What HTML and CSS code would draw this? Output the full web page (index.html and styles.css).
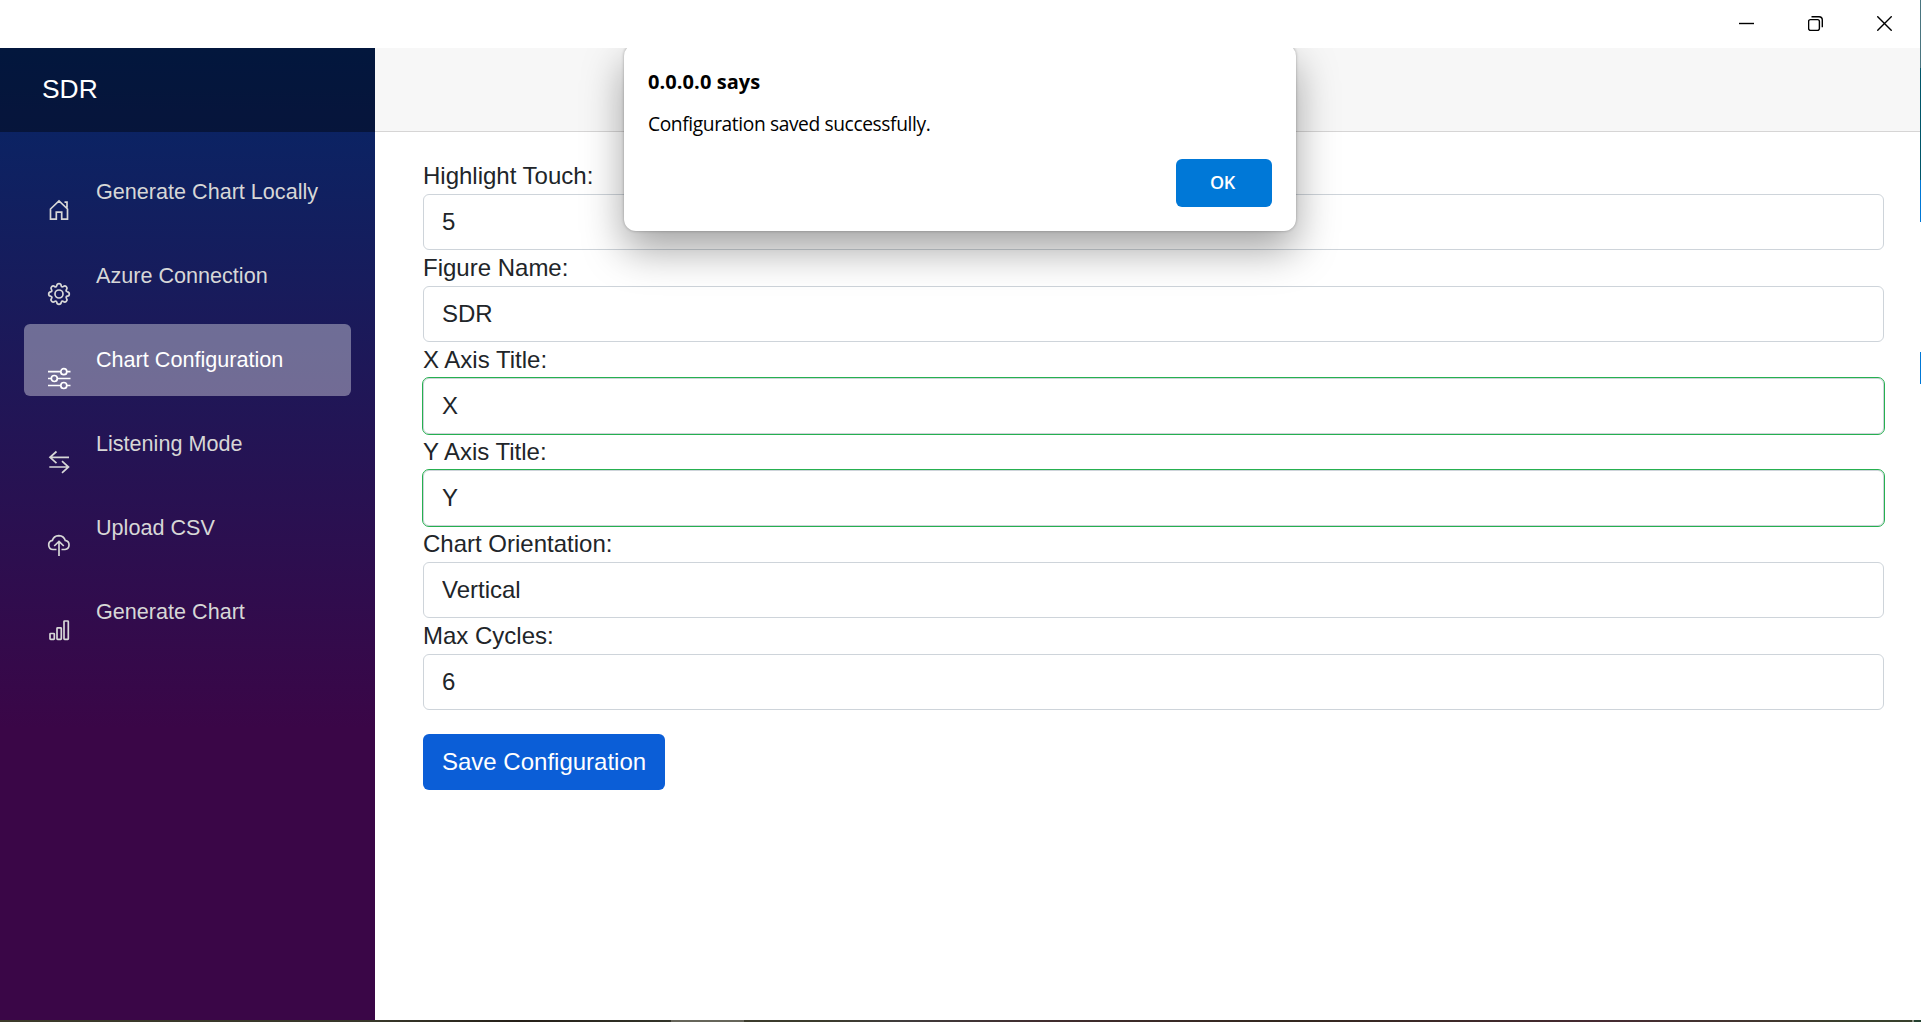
FILE: index.html
```html
<!DOCTYPE html>
<html lang="en">
<head>
<meta charset="utf-8">
<title>SDR</title>
<link rel="stylesheet" href="styles.css">
</head>
<body>
<div class="window">
  <header class="titlebar">
    <button class="wc" aria-label="Minimize"><svg width="15" height="15" viewBox="0 0 15 15"><path d="M0 7.5h15"/></svg></button>
    <button class="wc" aria-label="Restore"><svg width="15" height="15" viewBox="0 0 15 15"><rect x=".6" y="3.6" width="10.8" height="10.8" rx="1.8"/><path d="M3.5 .7H11a3.3 3.3 0 0 1 3.3 3.3v7.3"/></svg></button>
    <button class="wc" aria-label="Close"><svg width="15" height="15" viewBox="0 0 15 15"><path d="M.3.3l14.4 14.4M14.7.3L.3 14.7"/></svg></button>
  </header>
  <div class="page">
    <aside class="sidebar">
      <div class="brand">SDR</div>
      <nav class="nav">
        <a class="link"><svg class="icon" viewBox="0 0 24 24"><path d="M3.500 21.200V11L12 3l8.500 8v10.200h-5.800v-7H9.300v7zM17.500 4.100H20v5.600"/></svg><span>Generate Chart Locally</span></a>
        <a class="link"><svg class="icon" viewBox="0 0 24 24"><circle cx="12" cy="12" r="4"/><path d="M9.800 3.600Q10 1.700 12 1.700t2.200 1.900 2.200.9q1.500-1.200 2.900.2t.2 2.900.9 2.200q1.900.2 1.900 2.200t-1.900 2.200-.9 2.200q1.200 1.500-.2 2.900t-2.900.2-2.200.9q-.2 1.900-2.200 1.900t-2.200-1.900-2.200-.9q-1.500 1.200-2.900-.2t-.2-2.900-.9-2.200Q1.700 14 1.700 12t1.900-2.200.9-2.200Q3.300 6.100 4.700 4.700t2.900-.2 2.200-.9z"/></svg><span>Azure Connection</span></a>
        <a class="link active"><svg class="icon" viewBox="0 0 24 24"><path d="M1 5.700h12.500M20 5.700h3.500M1 12.500h3.200M10.500 12.500h13M1 19.500h12.500M20 19.500h3.500"/><circle cx="16.800" cy="5.700" r="3"/><circle cx="7.300" cy="12.500" r="3"/><circle cx="16.800" cy="19.500" r="3"/></svg><span>Chart Configuration</span></a>
        <a class="link"><svg class="icon" viewBox="0 0 24 24"><path d="M22 7.300H3M9.500 1.500L3 7.300l6.500 5.800M2.300 17h19.200M15 11.200l6.500 5.800-6.500 5.800"/></svg><span>Listening Mode</span></a>
        <a class="link"><svg class="icon" viewBox="0 0 24 24"><path d="M9.500 15.500H6a4.600 4.600 0 0 1-.6-9.100Q6.600 1.800 11.800 1.600q5.200.2 6.400 4.800a4.600 4.600 0 0 1-.2 9.100h-3.500M12 22V7.700M7.200 12L12 7.400l4.800 4.600"/></svg><span>Upload CSV</span></a>
        <a class="link"><svg class="icon" viewBox="0 0 24 24"><rect x="3" y="15.500" width="4.300" height="5.800" rx=".6"/><rect x="10" y="9.800" width="4.300" height="11.500" rx=".6"/><rect x="17" y="3" width="4.300" height="18.300" rx=".6"/></svg><span>Generate Chart</span></a>
      </nav>
    </aside>
    <main class="main">
      <div class="top-row"></div>
      <form class="content">
        <label for="touch">Highlight Touch:</label>
        <input id="touch" value="5">
        <label for="figure">Figure Name:</label>
        <input id="figure" value="SDR">
        <label for="xaxis">X Axis Title:</label>
        <input id="xaxis" class="valid" value="X">
        <label for="yaxis">Y Axis Title:</label>
        <input id="yaxis" class="valid" value="Y">
        <label for="orient">Chart Orientation:</label>
        <input id="orient" value="Vertical">
        <label for="cycles">Max Cycles:</label>
        <input id="cycles" value="6">
        <button type="button" class="save">Save Configuration</button>
      </form>
      <div class="dialog-clip">
        <div class="dialog" role="alertdialog">
          <h2>0.0.0.0 says</h2>
          <p>Configuration saved successfully.</p>
          <button class="ok">OK</button>
        </div>
      </div>
    </main>
  </div>
</div>
<div class="edge-right"></div>
<div class="edge-bottom"></div>
</body>
</html>
```
FILE: styles.css
```css
* { box-sizing: border-box; }
body {
  margin: 0;
  height: 1022px;
  overflow: hidden;
  display: grid;
  grid-template: 1020px 2px / 1920px 1px;
  background: #fff;
  color: #212529;
  font: 24px/36px "Liberation Sans", Arial, sans-serif;
}
.window { display: flex; flex-direction: column; }
.titlebar { height: 48px; padding: 0 1px 1px 0; display: flex; justify-content: flex-end; }
.wc {
  width: 69px; padding: 0; border: 0; background: none;
  display: flex; align-items: center; justify-content: center;
}
.wc svg { fill: none; stroke: #000; stroke-width: 1.4; }
.page { flex: 1; display: flex; }
.sidebar {
  width: 375px;
  background: linear-gradient(180deg, rgb(5, 39, 103) 0%, #3a0647 70%);
}
.brand {
  height: 84px;
  padding-left: 42px;
  font-size: 26.4px;
  line-height: 82px;
  color: #fff;
  background: rgba(0, 0, 0, .4);
}
.nav { padding: 24px 24px 0; display: flex; flex-direction: column; gap: 12px; }
.link {
  height: 72px;
  padding-left: 23px;
  border-radius: 6px;
  display: flex;
  gap: 25px;
  font-size: 21.6px;
  line-height: 71px;
  color: #d7d7d7;
}
.active { background: rgba(255, 255, 255, .37); color: #fff; }
.icon {
  width: 24px; height: 24px; margin-top: 42px;
  fill: none; stroke: currentColor; stroke-width: 1.7;
}
.main { flex: 1; position: relative; }
.top-row { height: 84px; background: #f7f7f7; border-bottom: 1px solid #d6d5d5; }
.content { padding: 26px 36px 0 48px; display: flex; flex-direction: column; }
.content input {
  height: 56px;
  padding: 9px 18px;
  border: 1px solid #ced4da;
  border-radius: 6px;
  background: #fff;
  color: #212529;
  font: inherit;
}
.content .valid { outline: 1px solid #26b050; }
.save {
  align-self: flex-start;
  height: 56px;
  margin-top: 24px;
  padding: 0 19px;
  border: 0;
  border-radius: 6px;
  background: #0b5ed7;
  color: #fff;
  font: inherit;
}
.dialog-clip {
  position: absolute; top: 0; left: 149px;
  width: 872px; height: 300px;
  padding: 0 100px;
  overflow: hidden;
}
.dialog {
  height: 187px;
  margin-top: -4px;
  padding: 20px 24px 24px;
  display: flex;
  flex-direction: column;
  border-radius: 12px;
  background: #fff;
  box-shadow: 0 0 3px rgba(0, 0, 0, .3), 0 19px 42px rgba(0, 0, 0, .36);
  color: #000;
  font-family: "Open Sans", "Noto Sans", sans-serif;
}
.dialog h2 { margin: 3px 0 0; font-size: 20px; line-height: 30px; font-weight: 700; letter-spacing: .08px; }
.dialog p { margin: 12px 0 0; font-size: 19.2px; line-height: 30px; letter-spacing: -.39px; }
.ok {
  align-self: flex-end;
  width: 96px; height: 48px;
  margin-top: 20px;
  padding: 0 3px 2px 0;
  border: 0; border-radius: 6px;
  background: #0078d7;
  color: #fff;
  font: 600 18px "Open Sans", sans-serif;
  letter-spacing: -.3px;
}
.edge-right {
  background: linear-gradient(#4a7580 0 68px, #00566a 68px 180px, #0078d7 180px 222px, #fff 222px 352px, #0078d7 352px 384px, #fff 384px);
}
.edge-bottom {
  grid-column: 1 / -1;
  background: linear-gradient(90deg, #3c3b2a 0, #38382a 375px, #251f18 520px, #33352a 671px, #66655a 671px 744px, #3b3b2c 744px 820px, #403c3c 900px, #402c2e 1050px, #33281f 1280px, #452a31 1600px, #41382f 1781px, #38402c 1850px 1912px, #8d9384 1912px 1914px, #24402f 1914px);
}
```
